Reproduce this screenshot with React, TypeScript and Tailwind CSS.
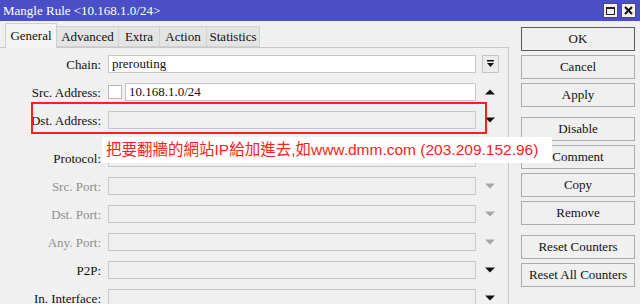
import React from "react";

const tabs = [
  { name: "General", w: "w-[52px]", active: true },
  { name: "Advanced", w: "w-[62px]", active: false },
  { name: "Extra", w: "w-[41px]", active: false },
  { name: "Action", w: "w-[47px]", active: false },
  { name: "Statistics", w: "w-[53px]", active: false },
];

type Arrow = "down" | "up" | "gray" | "menu" | "none";

function ArrowCell({ kind }: { kind: Arrow }) {
  if (kind === "menu") {
    return (
      <div className="ml-[6px] w-[17px] h-[18px] border border-[#c4c4c4] bg-[#ececec] flex items-center justify-center">
        <svg width="9" height="8" viewBox="0 0 9 8">
          <rect x="1" y="0" width="7" height="1.5" fill="#111" />
          <polygon points="1,3 8,3 4.5,7" fill="#111" />
        </svg>
      </div>
    );
  }
  if (kind === "none") return <div className="w-[23px]" />;
  const fill = kind === "gray" ? "#a6a6a6" : "#111";
  return (
    <div className="w-[23px] flex justify-center pl-[5px]">
      <svg width="10" height="6" viewBox="0 0 10 6">
        {kind === "up" ? (
          <polygon points="0,5.5 10,5.5 5,0.5" fill={fill} />
        ) : (
          <polygon points="0,0.5 10,0.5 5,5.5" fill={fill} />
        )}
      </svg>
    </div>
  );
}

function Row({
  label,
  value,
  white,
  dim,
  arrow,
  check,
}: {
  label: string;
  value?: string;
  white?: boolean;
  dim?: boolean;
  arrow: Arrow;
  check?: boolean;
}) {
  return (
    <div className="flex items-center h-[18px]">
      <div className={`w-[101px] text-right text-[13px] leading-none ${dim ? "text-[#8f8f8f]" : "text-[#111]"}`}>
        {label}
      </div>
      <div className="ml-[7px] w-[368px] flex gap-[3px]">
        {check && <div className="w-[14px] h-[14px] mt-[2px] bg-white border border-[#b8b8b8] shrink-0" />}
        <div
          className={`flex-1 h-[18px] border px-[3px] flex items-center text-[13px] text-[#111] ${
            white ? "bg-white border-[#c6c6c6]" : "bg-[#efefef] border-[#c6c6c6]"
          }`}
        >
          {value}
        </div>
      </div>
      <ArrowCell kind={arrow} />
    </div>
  );
}

function Btn({ label, def, extra }: { label: string; def?: boolean; extra?: string }) {
  return (
    <div
      className={`h-[24px] w-[114px] flex items-center justify-center text-[13px] text-[#111] bg-[#f0f0f0] border ${
        def ? "border-[#5a5a5a]" : "border-[#acacac]"
      } ${extra ?? ""}`}
    >
      {label}
    </div>
  );
}

export default function App() {
  return (
    <div className="relative w-[640px] h-[304px] overflow-hidden bg-[#f0f0f0] font-['Liberation_Serif',serif]">
      {/* title bar */}
      <div className="h-[21px] bg-[#4a4fc6] flex items-center justify-between pl-[3px] pr-[4px]">
        <span className="text-white text-[13px] leading-none">Mangle Rule &lt;10.168.1.0/24&gt;</span>
        <div className="flex gap-[3px]">
          <div className="w-[15px] h-[15px] bg-[#f0f0f0] border border-[#4d4d4d] flex items-center justify-center">
            <div className="w-[9px] h-[8px] border border-[#222] border-t-2" />
          </div>
          <div className="w-[15px] h-[15px] bg-[#f0f0f0] border border-[#4d4d4d] flex items-center justify-center">
            <svg width="9" height="9" viewBox="0 0 9 9">
              <path d="M1 1 L8 8 M8 1 L1 8" stroke="#111" strokeWidth="2" />
            </svg>
          </div>
        </div>
      </div>

      <div className="flex">
        {/* left: tabs + panel */}
        <div className="w-[509px]">
          <div className="flex items-end h-[26px] pl-[5px]">
            {tabs.map((t) =>
              t.active ? (
                <div
                  key={t.name}
                  className={`${t.w} h-[25px] relative z-10 -mb-px bg-[#f3f3f3] border border-b-0 border-[#cfcfcf] flex items-center justify-center text-[13px] text-[#111]`}
                >
                  {t.name}
                </div>
              ) : (
                <div
                  key={t.name}
                  className={`${t.w} h-[21px] bg-[#e4e4e4] border border-l-0 first:border-l border-[#d2d2d2] flex items-center justify-center text-[13px] text-[#111]`}
                >
                  {t.name}
                </div>
              )
            )}
          </div>
          <div className="h-[257px] border-t border-r border-[#c8c8c8] pt-[7px] flex flex-col gap-[10px]">
            <Row label="Chain:" value="prerouting" white arrow="menu" />
            <Row label="Src. Address:" value="10.168.1.0/24" white check arrow="up" />
            <Row label="Dst. Address:" arrow="down" />
            <div className="ml-[10px] mr-[10px] h-px bg-[#d0d0d0]" />
            <Row label="Protocol:" arrow="down" />
            <Row label="Src. Port:" dim arrow="gray" />
            <Row label="Dst. Port:" dim arrow="gray" />
            <Row label="Any. Port:" dim arrow="gray" />
            <Row label="P2P:" arrow="down" />
            <Row label="In. Interface:" arrow="down" />
          </div>
        </div>

        {/* right: buttons */}
        <div className="pl-[12px] pt-[6px] flex flex-col gap-[4px]">
          <Btn label="OK" def />
          <Btn label="Cancel" />
          <Btn label="Apply" />
          <Btn label="Disable" extra="mt-[6px]" />
          <Btn label="Comment" />
          <Btn label="Copy" />
          <Btn label="Remove" />
          <Btn label="Reset Counters" extra="mt-[6px]" />
          <Btn label="Reset All Counters" />
        </div>
      </div>

      {/* annotation: red box */}
      <div className="absolute left-[31px] top-[102px] w-[456px] h-[32px] border-2 border-[#ff1f1f]" />
      {/* annotation: label */}
      <div className="absolute left-[102px] top-[137px] w-[450px] h-[26px] bg-white pl-[4px] flex items-center whitespace-nowrap overflow-hidden text-[15.5px] leading-none text-[#ff2020] font-['Liberation_Sans','Noto_Sans_CJK_TC',sans-serif]">
        把要翻牆的網站IP給加進去,如www.dmm.com (203.209.152.96)
      </div>
    </div>
  );
}
